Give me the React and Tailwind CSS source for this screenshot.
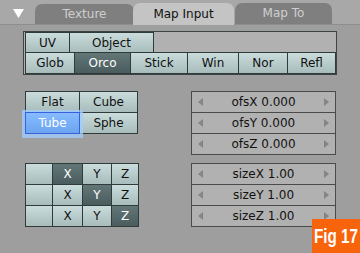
import React from "react";

const btnBase =
  "h-[22px] flex items-center justify-center border border-[#2f3b3b] leading-none";
const normal = "bg-gradient-to-b from-[#cadcdc] to-[#a8bcbc] text-[#111]";
const sel = "bg-gradient-to-b from-[#627678] to-[#4a5c5e] text-white";

function Btn({ className = "", selected = false, children }) {
  return (
    <div className={`${btnBase} ${selected ? sel : normal} ${className}`}>
      {children}
    </div>
  );
}

function Arrow({ dir }) {
  return (
    <svg width="5" height="8" viewBox="0 0 5 8" className="shrink-0">
      {dir === "l" ? (
        <polygon points="5,0 5,8 0,4" fill="#858585" />
      ) : (
        <polygon points="0,0 0,8 5,4" fill="#858585" />
      )}
    </svg>
  );
}

function Num({ label, className = "" }) {
  return (
    <div
      className={`h-[22px] flex items-center px-[6px] border border-[#4a4a4a] bg-[#b1b1b1] text-[#111] ${className}`}
    >
      <Arrow dir="l" />
      <div className="flex-1 text-center leading-none">{label}</div>
      <Arrow dir="r" />
    </div>
  );
}

export default function App() {
  return (
    <div className="w-[360px] h-[253px] bg-[#9e9e9e] relative overflow-hidden font-['DejaVu_Sans',sans-serif] text-[12px]">
      {/* header */}
      <div className="h-[25px] bg-[#a8a8a8] flex items-end border-b border-[#8e8e8e]">
        <div className="w-[35px] h-full flex items-start pt-[9px] pl-[13px]">
          <svg width="11" height="9" viewBox="0 0 11 9">
            <polygon points="0,0 11,0 5.5,9" fill="#ffffff" />
          </svg>
        </div>
        <div className="w-[99px] h-[20px] rounded-t-[7px] bg-[#7f7f7f] text-[#cfcfcf] flex items-center justify-center leading-none pb-[1px]">
          Texture
        </div>
        <div className="w-[101px] h-[22px] rounded-t-[7px] bg-[#c4c4c4] text-[#111] flex items-center justify-center leading-none -ml-[1px] mb-[-1px] pb-[1px]">
          Map Input
        </div>
        <div className="w-[97px] h-[21px] rounded-t-[7px] bg-[#7f7f7f] text-[#cfcfcf] flex items-center justify-center leading-none ml-[1px] pb-[1px]">
          Map To
        </div>
      </div>

      {/* body */}
      <div className="pl-[23px] pt-[6px]">
        {/* coordinates block */}
        <div className="w-[314px] border border-[#3c4444] bg-[#b1b1b1] pl-[1px]">
          <div className="flex h-[21px]">
            <Btn className="w-[45px] h-[21px]">UV</Btn>
            <Btn className="w-[85px] h-[21px] -ml-[1px]">Object</Btn>
          </div>
          <div className="flex -mt-[1px]">
            <Btn className="w-[50px]">Glob</Btn>
            <Btn className="w-[57px] -ml-[1px]" selected>
              Orco
            </Btn>
            <Btn className="w-[58px] -ml-[1px]">Stick</Btn>
            <Btn className="w-[52px] -ml-[1px]">Win</Btn>
            <Btn className="w-[50px] -ml-[1px]">Nor</Btn>
            <Btn className="w-[49px] -ml-[1px]">Refl</Btn>
          </div>
        </div>

        {/* row A */}
        <div className="flex mt-[16px]">
          <div className="w-[113px] ml-[2px]">
            <div className="flex">
              <Btn className="w-[55px]">Flat</Btn>
              <Btn className="w-[59px] -ml-[1px]">Cube</Btn>
            </div>
            <div className="flex -mt-[1px]">
              <div className="w-[55px] h-[22px] relative z-10 border border-[#3a5ee0] bg-gradient-to-b from-[#86bbff] to-[#6ca4f0] text-white flex items-center justify-center leading-none shadow-[0_1px_0_3px_rgba(160,205,255,0.75)]">
                Tube
              </div>
              <Btn className="w-[59px] -ml-[1px]">Sphe</Btn>
            </div>
          </div>
          <div className="w-[145px] ml-[53px]">
            <Num label="ofsX 0.000" />
            <Num label="ofsY 0.000" className="-mt-[1px]" />
            <Num label="ofsZ 0.000" className="-mt-[1px]" />
          </div>
        </div>

        {/* row B */}
        <div className="flex mt-[8px]">
          <div className="w-[114px] ml-[2px]">
            <div className="flex">
              <Btn className="w-[28px]"></Btn>
              <Btn className="w-[31px] -ml-[1px]" selected>
                X
              </Btn>
              <Btn className="w-[30px] -ml-[1px]">Y</Btn>
              <Btn className="w-[28px] -ml-[1px]">Z</Btn>
            </div>
            <div className="flex -mt-[1px]">
              <Btn className="w-[28px]"></Btn>
              <Btn className="w-[31px] -ml-[1px]">X</Btn>
              <Btn className="w-[30px] -ml-[1px]" selected>
                Y
              </Btn>
              <Btn className="w-[28px] -ml-[1px]">Z</Btn>
            </div>
            <div className="flex -mt-[1px]">
              <Btn className="w-[28px]"></Btn>
              <Btn className="w-[31px] -ml-[1px]">X</Btn>
              <Btn className="w-[30px] -ml-[1px]">Y</Btn>
              <Btn className="w-[28px] -ml-[1px]" selected>
                Z
              </Btn>
            </div>
          </div>
          <div className="w-[145px] ml-[52px]">
            <Num label="sizeX 1.00" />
            <Num label="sizeY 1.00" className="-mt-[1px]" />
            <Num label="sizeZ 1.00" className="-mt-[1px]" />
          </div>
        </div>
      </div>

      {/* badge */}
      <div className="absolute left-[312px] top-[219px] w-[48px] h-[34px] bg-[#f8640c] flex items-center justify-center">
        <span className="font-['Liberation_Sans',sans-serif] font-bold text-[20px] text-white leading-none scale-x-[0.76] whitespace-nowrap">
          Fig 17
        </span>
      </div>
    </div>
  );
}
